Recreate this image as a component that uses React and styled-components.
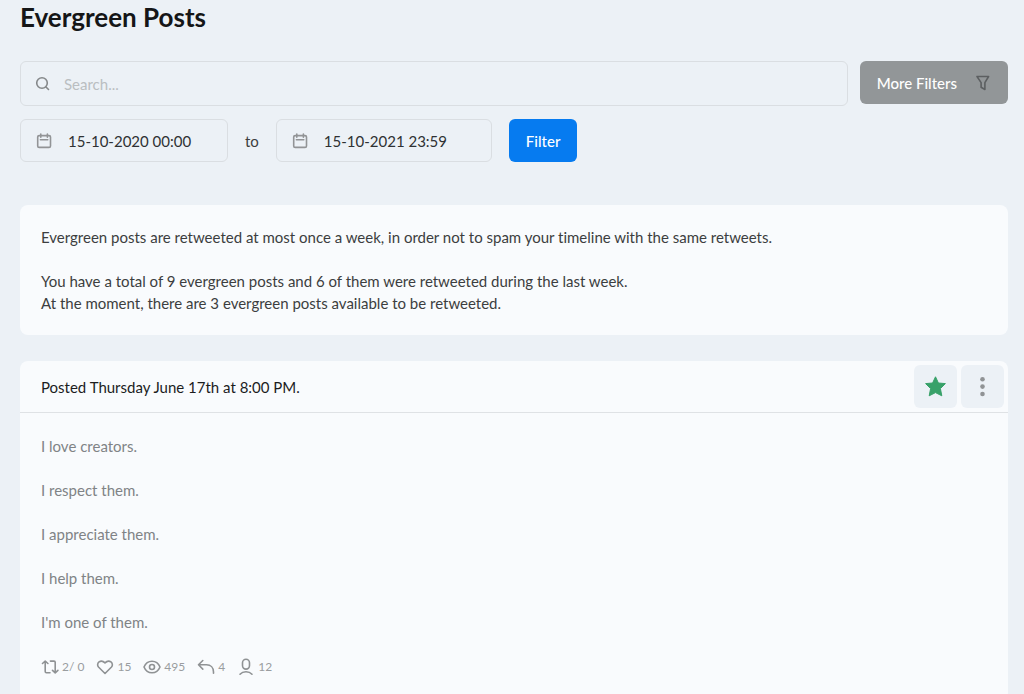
import { useState } from "react";
import styled, { createGlobalStyle } from "styled-components";

const post = {
    date: "Posted Thursday June 17th at 8:00 PM.",
    lines: ["I love creators.", "I respect them.", "I appreciate them.", "I help them.", "I'm one of them."],
};

const stats = [
    { icon: RetweetIcon, label: "Retweets", value: "2/ 0" },
    { icon: HeartIcon, label: "Likes", value: "15" },
    { icon: EyeIcon, label: "Impressions", value: "495" },
    { icon: ReplyIcon, label: "Replies", value: "4" },
    { icon: PersonIcon, label: "Profile clicks", value: "12" },
];

export default function App() {
    const [search, setSearch] = useState("");
    const [from, setFrom] = useState("15-10-2020 00:00");
    const [to, setTo] = useState("15-10-2021 23:59");

    return (
        <>
            <GlobalStyle />
            <Page>
                <Title>Evergreen Posts</Title>
                <Filters onSubmit={e => e.preventDefault()}>
                    <SearchRow>
                        <SearchBox>
                            <SearchIcon />
                            <input
                                type="text"
                                aria-label="Search"
                                placeholder="Search..."
                                value={search}
                                onChange={e => setSearch(e.target.value)}
                            />
                        </SearchBox>
                        <Button type="button" $color="#929698">
                            More Filters
                            <FunnelIcon />
                        </Button>
                    </SearchRow>
                    <DateRow>
                        <DateBox $width={208}>
                            <CalendarIcon />
                            <input type="text" aria-label="From" value={from} onChange={e => setFrom(e.target.value)} />
                        </DateBox>
                        <span>to</span>
                        <DateBox $width={216}>
                            <CalendarIcon />
                            <input type="text" aria-label="To" value={to} onChange={e => setTo(e.target.value)} />
                        </DateBox>
                        <Button type="submit" $color="#067bf0">Filter</Button>
                    </DateRow>
                </Filters>

                <InfoCard>
                    <p>Evergreen posts are retweeted at most once a week, in order not to spam your timeline with the same retweets.</p>
                    <p>
                        You have a total of 9 evergreen posts and 6 of them were retweeted during the last week.
                        <br />
                        At the moment, there are 3 evergreen posts available to be retweeted.
                    </p>
                </InfoCard>

                <PostCard>
                    <PostHeader>
                        <h2>{post.date}</h2>
                        <IconButton type="button" aria-label="Evergreen">
                            <StarIcon />
                        </IconButton>
                        <IconButton type="button" aria-label="More options">
                            <DotsIcon />
                        </IconButton>
                    </PostHeader>
                    <PostBody>
                        {post.lines.map(line => <p key={line}>{line}</p>)}
                        <Stats>
                            {stats.map(({ icon: Icon, label, value }) => (
                                <li key={label} title={label}>
                                    <Icon />
                                    {value}
                                </li>
                            ))}
                        </Stats>
                    </PostBody>
                </PostCard>
            </Page>
        </>
    );
}

function SearchIcon() {
    return (
        <Icon width="16" height="16" viewBox="0 0 16 16" $color="#85888a">
            <circle cx="7" cy="7" r="5.3" />
            <path d="M11 11l2.5 2.5" />
        </Icon>
    );
}

function CalendarIcon() {
    return (
        <Icon width="16" height="16" viewBox="0 0 16 16" $color="#929496">
            <rect x="1.7" y="2.6" width="12.8" height="11.8" rx="1.5" />
            <path d="M4.8 1v3.2M11.4 1v3.2M4.4 6.8h7.4" />
        </Icon>
    );
}

function FunnelIcon() {
    return (
        <Icon width="16" height="16" viewBox="0 0 16 16" $color="#5c5f61">
            <path d="M2 1.5h11.6L9.9 7.6v6.9l-3.8-2.3V7.6z" />
        </Icon>
    );
}

function StarIcon() {
    return (
        <svg width="24" height="24" viewBox="0 0 24 24" fill="#38a169" stroke="#38a169" strokeLinejoin="round">
            <path d="M11.5 1.8l2.9 6.2 7 .6-5 5 1.4 7.2-6.3-3.2-6.3 3.2 1.400-7.200-5-5 7-.6z" />
        </svg>
    );
}

function DotsIcon() {
    return (
        <svg width="24" height="24" viewBox="0 0 24 24" fill="#909395">
            <circle cx="11.5" cy="4.2" r="2.3" />
            <circle cx="11.5" cy="11.6" r="2.3" />
            <circle cx="11.5" cy="19" r="2.3" />
        </svg>
    );
}

function RetweetIcon() {
    return (
        <Icon width="18" height="18" viewBox="0 0 18 18">
            <path d="M1.5 5.5L4.2 3l2.7 2.5M4.2 3.300v10.200c0 .8.5 1.200 1.200 1.200H9M16.900 12.300l-2.700 2.500-2.700-2.500M14.200 14.500V4.300c0-.8-.5-1.200-1.200-1.200H9.400" />
        </Icon>
    );
}

function HeartIcon() {
    return (
        <Icon width="18" height="18" viewBox="0 0 18 18">
            <path d="M9 15.5L2.5 9C-.5 5.5 4.800.5 9 4.900c4.200-4.400 9.500.6 6.500 4.100z" />
        </Icon>
    );
}

function EyeIcon() {
    return (
        <Icon width="18" height="18" viewBox="0 0 18 18">
            <path d="M1 9c1.5-3.6 4.5-5.8 8-5.8s6.5 2.2 8 5.8c-1.5 3.6-4.5 5.8-8 5.8S2.5 12.6 1 9z" />
            <circle cx="9" cy="9" r="2.5" />
        </Icon>
    );
}

function ReplyIcon() {
    return (
        <Icon width="18" height="18" viewBox="0 0 18 18">
            <path d="M5.8 2.5L1.5 6.8l4.3 4.3M1.8 6.8h7.7c4.2 0 7 2.9 7 7.2v1.3" />
        </Icon>
    );
}

function PersonIcon() {
    return (
        <Icon width="18" height="18" viewBox="0 0 18 18">
            <rect x="5.5" y="1.3" width="7" height="9.8" rx="3.5" />
            <path d="M3 16.200c1.600-1.700 3.600-2.400 6-2.400s4.400.7 6 2.400" />
        </Icon>
    );
}

const GlobalStyle = createGlobalStyle`
    * {
        box-sizing: border-box;
    }

    body {
        margin: 0;
        background-color: #ecf1f6;
        color: #3c3e40;
        font-family: 'Lato', sans-serif;
        font-size: 15px;
        line-height: 22px;
        font-variant-ligatures: none;
    }

    h1, h2, p, ul {
        margin: 0;
        padding: 0;
    }

    button, input {
        font: inherit;
    }
`;

const Icon = styled.svg`
    flex-shrink: 0;
    fill: none;
    stroke: ${props => props.$color || "#8f9294"};
    stroke-width: 1.6;
    stroke-linecap: round;
    stroke-linejoin: round;
`;

const Page = styled.main`
    padding: 2px 16px 0 20px;
`;

const Title = styled.h1`
    color: #151617;
    font-size: 26px;
    font-weight: 700;
    line-height: 30px;
`;

const Filters = styled.form`
    margin-top: 29px;
    display: flex;
    flex-direction: column;
    gap: 13px;
`;

const SearchRow = styled.div`
    display: flex;
    align-items: flex-start;
    gap: 12px;
`;

const Field = styled.label`
    display: flex;
    align-items: center;
    border: 1px solid #dadee2;
    border-radius: 6px;

    input {
        flex: 1;
        min-width: 0;
        padding: 0;
        border: none;
        outline: none;
        background: none;
        color: #2f3133;
    }

    input::placeholder {
        color: #babec1;
        opacity: 1;
    }
`;

const SearchBox = styled(Field)`
    flex: 1;
    height: 45px;
    padding: 0 14px;
    gap: 13px;
`;

const DateRow = styled.div`
    display: flex;
    align-items: center;
    gap: 17px;
`;

const DateBox = styled(Field)`
    width: ${props => props.$width}px;
    height: 43px;
    padding: 0 15px;
    gap: 16px;
`;

const Button = styled.button`
    height: 43px;
    padding: 0 17px;
    display: flex;
    align-items: center;
    gap: 18px;
    border: none;
    border-radius: 6px;
    background-color: ${props => props.$color};
    color: #fff;
    font-weight: 500;
    white-space: nowrap;
    cursor: pointer;
`;

const InfoCard = styled.section`
    margin-top: 43px;
    padding: 21px;
    border-radius: 8px;
    background-color: #f9fbfd;

    p + p {
        margin-top: 22px;
    }
`;

const PostCard = styled.article`
    margin-top: 26px;
    border-radius: 8px;
    background-color: #f9fbfd;
`;

const PostHeader = styled.header`
    padding: 4px 4px 4px 21px;
    display: flex;
    align-items: center;
    gap: 4px;
    border-bottom: 1px solid #dfe2e5;

    h2 {
        flex: 1;
        color: #1c1d1e;
        font-size: 15px;
        font-weight: 400;
    }
`;

const IconButton = styled.button`
    width: 43px;
    height: 43px;
    padding: 0;
    display: flex;
    align-items: center;
    justify-content: center;
    border: none;
    border-radius: 6px;
    background-color: #ecf1f6;
    cursor: pointer;
`;

const PostBody = styled.div`
    padding: 22px 21px;
    display: flex;
    flex-direction: column;
    gap: 22px;
    color: #808386;
`;

const Stats = styled.ul`
    display: flex;
    gap: 12px;
    color: #9a9da0;
    font-size: 12px;
    line-height: 24px;
    list-style: none;

    li {
        display: flex;
        align-items: center;
        gap: 3px;
    }
`;
